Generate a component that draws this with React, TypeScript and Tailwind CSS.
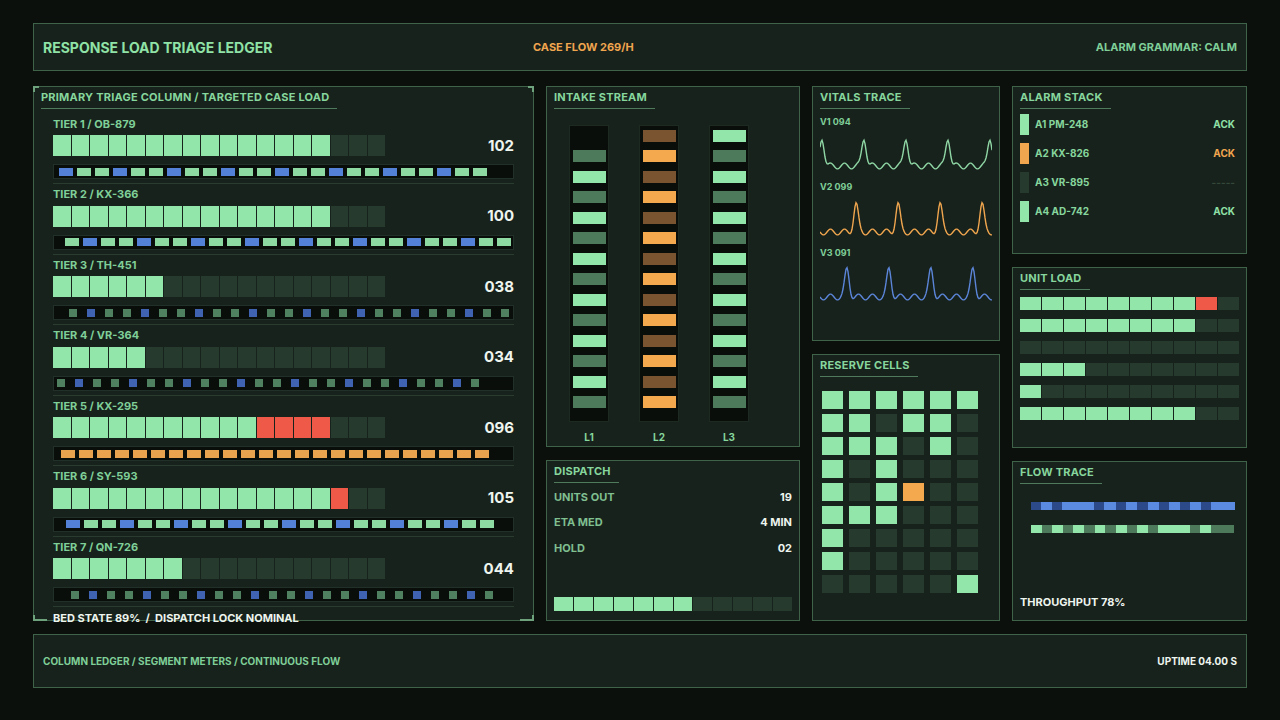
import React from "react";

const G = "bg-[#93e6a9]";
const DIM = "bg-[#263a2d]";
const MID = "bg-[#4d7a5b]";

const Title = ({ children }: { children: React.ReactNode }) => (
  <div className="inline-block self-start border-b border-[#4f7a5c] pr-2 pb-[2px] text-[11px] font-bold tracking-[0.02em] text-[#86d69d]">
    {children}
  </div>
);

const Panel = ({ title, className = "", children }: { title: string; className?: string; children?: React.ReactNode }) => (
  <div className={`flex flex-col border border-[#3f6349] bg-[#18221c] px-[7px] pt-[2px] ${className}`}>
    <Title>{title}</Title>
    {children}
  </div>
);

type Tier = { name: string; green: number; red: number; value: string; sub: string; n: number; offset: number; small?: boolean };

const tiers: Tier[] = [
  { name: "TIER 1 / OB-879", green: 15, red: 0, value: "102", sub: "bgg", n: 24, offset: 5 },
  { name: "TIER 2 / KX-366", green: 15, red: 0, value: "100", sub: "gbgg".slice(0, 3), n: 25, offset: 11 },
  { name: "TIER 3 / TH-451", green: 6, red: 0, value: "038", sub: "gbg", n: 25, offset: 15, small: true },
  { name: "TIER 4 / VR-364", green: 5, red: 0, value: "034", sub: "gbg", n: 24, offset: 3, small: true },
  { name: "TIER 5 / KX-295", green: 11, red: 4, value: "096", sub: "o", n: 24, offset: 7 },
  { name: "TIER 6 / SY-593", green: 15, red: 1, value: "105", sub: "bgg", n: 24, offset: 12 },
  { name: "TIER 7 / QN-726", green: 7, red: 0, value: "044", sub: "gbg", n: 24, offset: 17, small: true },
];

const subColor = (c: string, small?: boolean) => {
  if (c === "o") return "bg-[#e9a24e]";
  if (c === "b") return small ? "bg-[#3f63b0]" : "bg-[#5381d8]";
  return small ? "bg-[#4f8160]" : "bg-[#8edaa3]";
};

function TierRow({ t }: { t: Tier }) {
  return (
    <div className="flex flex-col border-b border-[#2a3b2f] pb-[4px] pt-[3px]">
      <div className="text-[11px] font-bold leading-[14px] text-[#7fcf98]">{t.name}</div>
      <div className="mt-[4px] flex items-center">
        <div className="flex gap-[1px]">
          {Array.from({ length: 18 }).map((_, i) => (
            <div
              key={i}
              className={`h-[21px] w-[17.5px] ${i < t.green ? G : i < t.green + t.red ? "bg-[#ef5a48]" : DIM}`}
            />
          ))}
        </div>
        <div className="ml-auto text-[15px] font-bold text-[#eef5ef]">{t.value}</div>
      </div>
      <div className="mt-[7px] flex h-[15px] items-center border border-[#22302a] bg-[#090e0b]" style={{ paddingLeft: t.offset }}>
        <div className={`flex ${t.small ? "gap-[10px]" : "gap-[4px]"}`}>
          {Array.from({ length: t.n }).map((_, i) => (
            <div
              key={i}
              className={`h-[8px] ${t.small ? "w-[8px]" : "w-[14px]"} ${subColor(t.sub[i % t.sub.length], t.small)}`}
            />
          ))}
        </div>
      </div>
    </div>
  );
}

function wave(w: number, h: number, period: number, start: number, amp: number, base: number) {
  const pts: string[] = [];
  for (let x = 0; x <= w; x += 1) {
    let y = base + Math.sin((x / period) * Math.PI * 6) * 3;
    for (let p = start; p < w + period; p += period) {
      y -= amp * Math.exp(-((x - p) ** 2) / 10);
    }
    pts.push(`${x === 0 ? "M" : "L"}${x},${y.toFixed(1)}`);
  }
  return pts.join(" ");
}

const Vital = ({ label, color, start }: { label: string; color: string; start: number }) => (
  <div className="mt-[6px]">
    <div className="text-[9px] font-bold text-[#7fcf98]">{label}</div>
    <svg width="172" height="44" className="mt-[2px]">
      <path d={wave(172, 44, 42, start, 28, 36)} fill="none" stroke={color} strokeWidth="1.4" />
    </svg>
  </div>
);

const lane = (pattern: string[]) => (
  <div className="flex h-[297px] w-[40px] flex-col items-center gap-[8.5px] border border-[#1d2a22] bg-[#090e0b] pt-[4px]">
    {pattern.map((c, i) => (
      <div key={i} className={`h-[12px] w-[33px] shrink-0 ${c}`} />
    ))}
  </div>
);

const reserve = [
  "111111",
  "110110",
  "111010",
  "101000",
  "101200",
  "111000",
  "100000",
  "100000",
  "000001",
];

const unitLoad = [
  [8, 1],
  [8, 0],
  [0, 0],
  [3, 0],
  [1, 0],
  [8, 0],
];

const alarms = [
  { id: "A1 PM-248", c: G, ack: "ACK", ac: "text-[#8fe0a6]" },
  { id: "A2 KX-826", c: "bg-[#f0a64f]", ack: "ACK", ac: "text-[#f0a64f]" },
  { id: "A3 VR-895", c: DIM, ack: "-----", ac: "text-[#33483a]" },
  { id: "A4 AD-742", c: G, ack: "ACK", ac: "text-[#8fe0a6]" },
];

const flowBlue = [
  ["#2c4a8a", 10], ["#5b8be0", 11], ["#2c4a8a", 10], ["#5b8be0", 32], ["#2c4a8a", 10], ["#5b8be0", 12], ["#2c4a8a", 10], ["#5b8be0", 11], ["#2c4a8a", 11], ["#5b8be0", 11], ["#2c4a8a", 10], ["#5b8be0", 11], ["#2c4a8a", 10], ["#5b8be0", 11], ["#2c4a8a", 10], ["#5b8be0", 24],
] as const;
const flowGreen = [
  ["#93e6a9", 11], ["#4d7a5b", 10], ["#93e6a9", 11], ["#4d7a5b", 10], ["#93e6a9", 11], ["#4d7a5b", 11], ["#93e6a9", 10], ["#4d7a5b", 11], ["#93e6a9", 11], ["#4d7a5b", 10], ["#93e6a9", 11], ["#4d7a5b", 10], ["#93e6a9", 32], ["#4d7a5b", 10], ["#93e6a9", 11], ["#4d7a5b", 23],
] as const;

export default function App() {
  const l1 = ["bg-transparent", ...Array.from({ length: 13 }, (_, i) => (i % 2 === 0 ? MID : G))];
  const l2 = Array.from({ length: 14 }, (_, i) => (i % 2 === 0 ? "bg-[#7a5430]" : "bg-[#f4a94f]"));
  const l3 = Array.from({ length: 14 }, (_, i) => (i % 2 === 0 ? G : MID));

  return (
    <div
      className="flex h-[720px] w-[1280px] flex-col gap-[15px] bg-[#0b100d] px-[33px] pt-[23px] text-[#86d69d]"
      style={{ fontFamily: "Inter, 'Liberation Sans', sans-serif" }}
    >
      <div className="flex h-[48px] items-center border border-[#3f6349] bg-[#18221c] px-[9px]">
        <div className="w-[490px] text-[14px] font-bold text-[#8fe3a6]">RESPONSE LOAD TRIAGE LEDGER</div>
        <div className="text-[11px] font-bold text-[#f0a64f]">CASE FLOW 269/H</div>
        <div className="ml-auto text-[11px] font-bold text-[#7fcf98]">ALARM GRAMMAR: CALM</div>
      </div>

      <div className="flex h-[535px] gap-[12px]">
        <div className="relative flex w-[502px] flex-col border border-[#3f6349] bg-[#18221c] px-[7px] pt-[2px]">
          <div className="absolute -left-[1px] -top-[1px] h-[6px] w-[6px] border-l-2 border-t-2 border-[#6ea27d]" />
          <div className="absolute -right-[1px] -top-[1px] h-[6px] w-[6px] border-r-2 border-t-2 border-[#6ea27d]" />
          <div className="absolute -bottom-[1px] -left-[1px] h-[6px] w-[14px] border-b-2 border-l-2 border-[#6ea27d]" />
          <div className="absolute -bottom-[1px] -right-[1px] h-[6px] w-[14px] border-b-2 border-r-2 border-[#6ea27d]" />
          <Title>PRIMARY TRIAGE COLUMN / TARGETED CASE LOAD</Title>
          <div className="mt-[5px] flex flex-col px-[12px]">
            {tiers.map((t) => (
              <TierRow key={t.name} t={t} />
            ))}
            <div className="mt-[3px] text-[11px] font-bold text-[#eef5ef]">BED STATE 89% &nbsp;/&nbsp; DISPATCH LOCK NOMINAL</div>
          </div>
        </div>

        <div className="flex w-[254px] flex-col gap-[13px]">
          <Panel title="INTAKE STREAM" className="h-[361px]">
            <div className="mt-[16px] flex gap-[30px] pl-[15px]">
              {lane(l1)}
              {lane(l2)}
              {lane(l3)}
            </div>
            <div className="mt-[8px] flex gap-[30px] pl-[15px] text-[10px] font-bold">
              <div className="w-[40px] text-center">L1</div>
              <div className="w-[40px] text-center">L2</div>
              <div className="w-[40px] text-center">L3</div>
            </div>
          </Panel>
          <Panel title="DISPATCH" className="flex-1">
            <div className="mt-[6px] flex flex-col gap-[9px] text-[11px] font-bold">
              {[
                ["UNITS OUT", "19"],
                ["ETA MED", "4 MIN"],
                ["HOLD", "02"],
              ].map(([a, b]) => (
                <div key={a} className="flex justify-between">
                  <span className="text-[#7fbf90]">{a}</span>
                  <span className="text-[#eef5ef]">{b}</span>
                </div>
              ))}
            </div>
            <div className="mt-auto mb-[9px] flex gap-[1px]">
              {Array.from({ length: 12 }).map((_, i) => (
                <div key={i} className={`h-[14px] w-[19px] ${i < 7 ? G : DIM}`} />
              ))}
            </div>
          </Panel>
        </div>

        <div className="flex w-[188px] flex-col gap-[13px]">
          <Panel title="VITALS TRACE" className="h-[255px]">
            <Vital label="V1 094" color="#8fd6a5" start={2} />
            <Vital label="V2 099" color="#f0a64f" start={36} />
            <Vital label="V3 091" color="#5b85d8" start={27} />
          </Panel>
          <Panel title="RESERVE CELLS" className="flex-1">
            <div className="mt-[14px] grid grid-cols-[repeat(6,21px)] gap-x-[6px] gap-y-[5px] pl-[2px]">
              {reserve.join("").split("").map((c, i) => (
                <div key={i} className={`h-[18px] w-[21px] ${c === "1" ? G : c === "2" ? "bg-[#f4a94f]" : DIM}`} />
              ))}
            </div>
          </Panel>
        </div>

        <div className="flex w-[235px] flex-col gap-[13px]">
          <Panel title="ALARM STACK" className="h-[168px]">
            <div className="mt-[5px] flex flex-col gap-[8px]">
              {alarms.map((a) => (
                <div key={a.id} className="flex items-center gap-[6px]">
                  <div className={`h-[21px] w-[9px] ${a.c}`} />
                  <span className="text-[10px] font-bold text-[#86d69d]">{a.id}</span>
                  <span className={`ml-auto pr-[4px] text-[10px] font-bold ${a.ac}`}>{a.ack}</span>
                </div>
              ))}
            </div>
          </Panel>
          <Panel title="UNIT LOAD" className="h-[181px]">
            <div className="mt-[7px] flex flex-col gap-[9px]">
              {unitLoad.map(([g, r], ri) => (
                <div key={ri} className="flex gap-[1px]">
                  {Array.from({ length: 10 }).map((_, i) => (
                    <div key={i} className={`h-[13px] w-[21px] ${i < g ? G : i < g + r ? "bg-[#ef5a48]" : DIM}`} />
                  ))}
                </div>
              ))}
            </div>
          </Panel>
          <Panel title="FLOW TRACE" className="flex-1">
            <div className="mt-[18px] flex flex-col gap-[15px] pl-[11px]">
              {[flowBlue, flowGreen].map((row, ri) => (
                <div key={ri} className="flex h-[8px]">
                  {row.map(([c, w], i) => (
                    <div key={i} className="h-full" style={{ backgroundColor: c, width: w }} />
                  ))}
                </div>
              ))}
            </div>
            <div className="mt-auto mb-[10px] text-[11px] font-bold text-[#eef5ef]">THROUGHPUT 78%</div>
          </Panel>
        </div>
      </div>

      <div className="-mt-[2px] flex h-[54px] items-center border border-[#3f6349] bg-[#18221c] px-[9px] text-[10px] font-bold">
        <span className="text-[#7fcf98]">COLUMN LEDGER / SEGMENT METERS / CONTINUOUS FLOW</span>
        <span className="ml-auto text-[#eef5ef]">UPTIME 04.00 S</span>
      </div>
    </div>
  );
}
